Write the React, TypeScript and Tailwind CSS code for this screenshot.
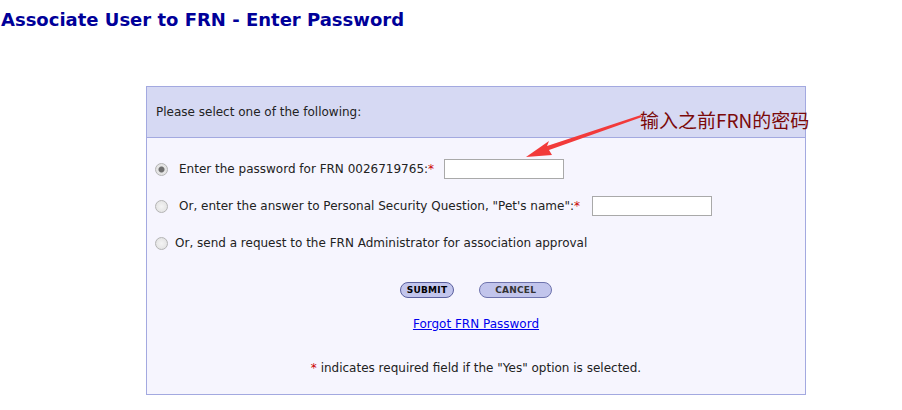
function Radio({ checked }: { checked?: boolean }) {
  return (
    <input
      type="radio"
      name="opt"
      defaultChecked={checked}
      className="m-0 h-[13px] w-[13px] appearance-none rounded-full border border-[#b4b4b4] bg-[radial-gradient(circle,#f4f4f4_0,#dedede_100%)] checked:bg-[radial-gradient(circle,#6e6e6e_0_2.5px,#e4e4e4_3.5px)]"
    />
  );
}

export default function App() {
  const font = { fontFamily: '"DejaVu Sans", Verdana, sans-serif' };
  return (
    <div className="h-[410px] w-[902px] bg-white" style={font}>
      <h1 className="pl-px pt-[8px] text-[18px] font-bold leading-[24px] text-[#000099]">
        Associate User to FRN - Enter Password
      </h1>
      <div className="relative ml-[146px] mt-[54px] w-[660px] border border-[#a3a9e0] bg-[#f6f5fe] text-[12px] text-[#222]">
        <div className="flex h-[51px] items-center border-b border-[#a3a9e0] bg-[#d6d9f3] pl-[9px]">
          Please select one of the following:
        </div>
        <div className="flex flex-col pl-[8px] pt-[20px]">
          <label className="flex h-[22px] items-center">
            <Radio checked />
            <span className="ml-[11px]">
              Enter the password for FRN 0026719765:<span className="text-[#cc0000]">*</span>
            </span>
            <input type="password" className="ml-[10px] h-[20px] w-[120px] border border-[#a9a9a9] bg-white" />
          </label>
          <label className="mt-[15px] flex h-[22px] items-center">
            <Radio />
            <span className="ml-[11px]">
              Or, enter the answer to Personal Security Question, "Pet's name":<span className="text-[#cc0000]">*</span>
            </span>
            <input type="text" className="ml-[12px] h-[20px] w-[120px] border border-[#a9a9a9] bg-white" />
          </label>
          <label className="mt-[15px] flex h-[22px] items-center">
            <Radio />
            <span className="ml-[7px]">Or, send a request to the FRN Administrator for association approval</span>
          </label>
        </div>
        <div className="mt-[28px] flex justify-center gap-[25px]">
          <button className="h-[16px] rounded-full border border-[#5b609e] bg-[#c2c5ec] px-[6px] text-[9px] font-bold leading-[14px] tracking-wide text-black">
            SUBMIT
          </button>
          <button className="h-[16px] rounded-full border border-[#6e73ad] bg-[#c2c5ec] px-[15px] text-[9px] font-bold leading-[14px] tracking-wide text-[#333]">
            CANCEL
          </button>
        </div>
        <div className="mt-[17px] text-center">
          <a href="#" className="text-[#0000ee] underline">Forgot FRN Password</a>
        </div>
        <div className="mb-[17px] mt-[26px] text-center">
          <span className="text-[#cc0000]">*</span> indicates required field if the "Yes" option is selected.
        </div>
        <div
          className="absolute left-[493px] top-[21px] whitespace-nowrap text-[19px] leading-[24px] text-[#7b0a0a]"
          style={{ fontFamily: '"Noto Sans CJK SC", "DejaVu Sans", sans-serif' }}
        >
          输入之前FRN的密码
        </div>
        <svg className="absolute left-[376px] top-[26px]" width="120" height="46" viewBox="0 0 120 46">
          <path d="M118 2 L24 33 L26 28 L3 44 L29 42 L26 37 L119 4 Z" fill="#f23a3a" />
        </svg>
      </div>
    </div>
  );
}
